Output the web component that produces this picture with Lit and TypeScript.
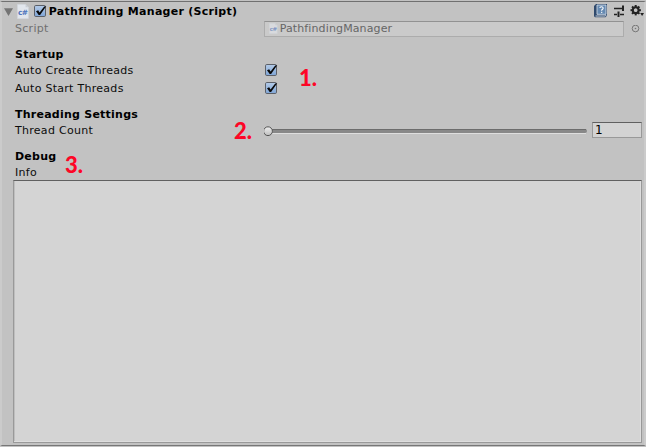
import { LitElement, html, css, svg } from "lit";
import { customElement, property } from "lit/decorators.js";

@customElement("check-box")
class CheckBox extends LitElement {
  static styles = css`
    :host { display: block; width: 13px; height: 13px; }
    svg { display: block; overflow: visible; }
  `;
  render() {
    return html`<svg width="13" height="13" viewBox="0 0 13 13">
      <defs><linearGradient id="g" x2="0" y2="1"><stop stop-color="#b4cbe8"/><stop offset="1" stop-color="#7fa5d6"/></linearGradient></defs>
      <rect x=".5" y=".5" width="11" height="11" rx="1.3" fill="url(#g)" stroke="#5c6068"/>
      <path d="M2 6.2 4.2 5.3 5.6 7.5 10.2 1.4 12.2 1.2 6.1 10 4.7 10Z" fill="#080808"/>
    </svg>`;
  }
}

@customElement("script-icon")
class ScriptIcon extends LitElement {
  @property({ type: Number }) size = 15;
  static styles = css`
    :host { display: block; }
    svg { display: block; }
    text { font: bold 7px "DejaVu Sans", sans-serif; fill: #4f74bd; letter-spacing: -.6px; }
  `;
  render() {
    return html`<svg width=${this.size * 11 / 14} height=${this.size} viewBox="0 0 11 14">
      <path d="M.3.3H8L10.7 3V13.7H.3Z" fill="#e2e6ec" stroke="#ced2d8" stroke-width=".6"/>
      <path d="M8 .3V3H10.7Z" fill="#c9cdd3"/>
      <text x="1" y="10">c#</text>
    </svg>`;
  }
}

@customElement("app-root")
class AppRoot extends LitElement {
  static styles = css`
    :host {
      display: block; position: relative; box-sizing: border-box; width: 646px; height: 447px; overflow: hidden;
      background: #c2c2c2; color: #0c0c0c; font: 11px/16px "DejaVu Sans", sans-serif;
      border-top: 1px solid #c2c2c2;
    }
    .panel {
      box-sizing: border-box; height: 445px; display: flex; flex-direction: column;
      border-top: 1px solid #707070; border-bottom: 1px solid #777;
      border-left: 2px solid #cbcbcb; border-right: 2px solid #cbcbcb;
    }
    .header { display: flex; align-items: center; height: 18px; padding-left: 2px; flex: none; }
    .fold { margin: 2px 5px 0 0; }
    .header script-icon { margin: 1px 5px 0 -1px; }
    .title { margin: 2px 0 0 2px; font-weight: bold; color: #000; white-space: nowrap; letter-spacing: .27px; }
    .tools { margin-left: auto; display: block; }
    .row { display: grid; grid-template-columns: 250px 1fr; height: 18px; flex: none; align-items: center; padding-left: 13px; }
    .row.short { height: 16px; }
    .row check-box { margin-top: -2px; }
    .label { white-space: nowrap; letter-spacing: .28px; }
    .head { font-weight: bold; color: #000; letter-spacing: .24px; }
    .gap { margin-top: 9px; }
    .gap.wide { margin-top: 10px; }
    .gap.first { height: 15px; }
    .row.script { height: 18px; grid-template-columns: 249px 1fr; color: #707070; }
    .object { display: flex; align-items: center; }
    .field {
      box-sizing: border-box; width: 360px; height: 16px; margin-top: -1px; display: flex; align-items: center; padding-left: 4px;
      background: #cacaca; border: 1px solid #acacac; border-top-color: #929292;
    }
    .field script-icon { opacity: .6; margin-right: 2px; }
    .name { margin-top: 1px; letter-spacing: .13px; color: #666; }
    .pick { margin-left: 7px; }
    .row.slide { grid-template-columns: 249px 1fr; }
    .slider { display: flex; align-items: center; }
    .number {
      box-sizing: border-box; width: 50px; height: 16px; margin: -2px 0 0 5px; padding-left: 2px; line-height: 15px;
      background: #d3d3d3; border: 1px solid #999; border-top-color: #606060; color: #000; font-size: 12px;
    }
    .area {
      box-sizing: border-box; width: 629px; height: 263px; margin: -1px 0 0 11px; flex: none;
      background: #d4d4d4; border: 1px solid #999; border-top-color: #606060;
      box-shadow: inset -1px -1px #dedede, inset 1px 0 #bebebe;
    }
    .note { position: absolute; font: 900 22px/26px Lato, "Open Sans", sans-serif; color: #fd0626; }
    .one { left: 299px; top: 64px; }
    .two { left: 234px; top: 117px; }
    .three { left: 65px; top: 151px; }
  `;

  gear() {
    return Array.from({ length: 8 }, (_, i) => svg`<rect x="41.7" y="3" width="2" height="3" fill="#222" transform="rotate(${i * 45} 42.7 8.2)"/>`);
  }

  render() {
    return html`
      <div class="panel">
        <div class="header">
          <svg class="fold" width="9" height="8"><path d="M0 .3H9L4.5 8Z" fill="#747474"/></svg>
          <script-icon></script-icon>
          <check-box></check-box>
          <span class="title">Pathfinding Manager (Script)</span>
          <svg class="tools" width="51" height="18" viewBox="0 0 51 18">
            <path d="M1 4 3 2H14V13.5L12.5 15.3H2L1 14.3Z" fill="#304a6d"/>
            <path d="M4 3H13V12.3H4Z" fill="#6589b1" stroke="#dbe5ef" stroke-width=".8"/>
            <path d="M2.5 14H12.3L13.3 13" fill="none" stroke="#e8edf3" stroke-width=".8"/>
            <path d="M6.8 6Q7 4.8 8.5 4.8T10.2 6Q10.2 7 8.7 8V8.8M8.7 9.8V11" fill="none" stroke="#fff" stroke-width="1.1"/>
            <path d="M21 6.5H31M21 12.5H24M27 12.5H31" stroke="#222" stroke-width="1.6"/>
            <path d="M30 3.5V9M25.5 9.5V15" stroke="#222" stroke-width="2"/>
            ${this.gear()}
            <circle cx="42.7" cy="8.2" r="2.9" fill="none" stroke="#222" stroke-width="2"/>
            <path d="M47.2 11H51L49.1 14Z" fill="#222"/>
          </svg>
        </div>
        <div class="row script">
          <span class="label">Script</span>
          <div class="object">
            <div class="field"><script-icon .size=${11}></script-icon><span class="name">PathfindingManager</span></div>
            <svg class="pick" width="9" height="9"><circle cx="4.5" cy="3.5" r="3.3" fill="none" stroke="#777"/><circle cx="4.5" cy="3.5" r=".8" fill="#777"/></svg>
          </div>
        </div>
        <div class="row short gap first"><span class="label head">Startup</span></div>
        <div class="row"><span class="label">Auto Create Threads</span><check-box></check-box></div>
        <div class="row"><span class="label">Auto Start Threads</span><check-box></check-box></div>
        <div class="row short gap"><span class="label head">Threading Settings</span></div>
        <div class="row short slide">
          <span class="label">Thread Count</span>
          <div class="slider">
            <svg width="323" height="12">
              <defs><linearGradient id="k" x2="0" y2="1"><stop stop-color="#f0f0f0"/><stop offset="1" stop-color="#bdbdbd"/></linearGradient></defs>
              <rect x="5" y="4" width="318" height="4" rx="2" fill="#888"/>
              <path d="M6 4.5H322" stroke="#6c6c6c"/><path d="M6 8.5H322" stroke="#dedede"/>
              <circle cx="4" cy="6.2" r="4.4" fill="url(#k)" stroke="#555"/>
            </svg>
            <div class="number">1</div>
          </div>
        </div>
        <div class="row short gap wide"><span class="label head">Debug</span></div>
        <div class="row short"><span class="label">Info</span></div>
        <div class="area"></div>
      </div>
      <span class="note one">1.</span>
      <span class="note two">2.</span>
      <span class="note three">3.</span>
    `;
  }
}
